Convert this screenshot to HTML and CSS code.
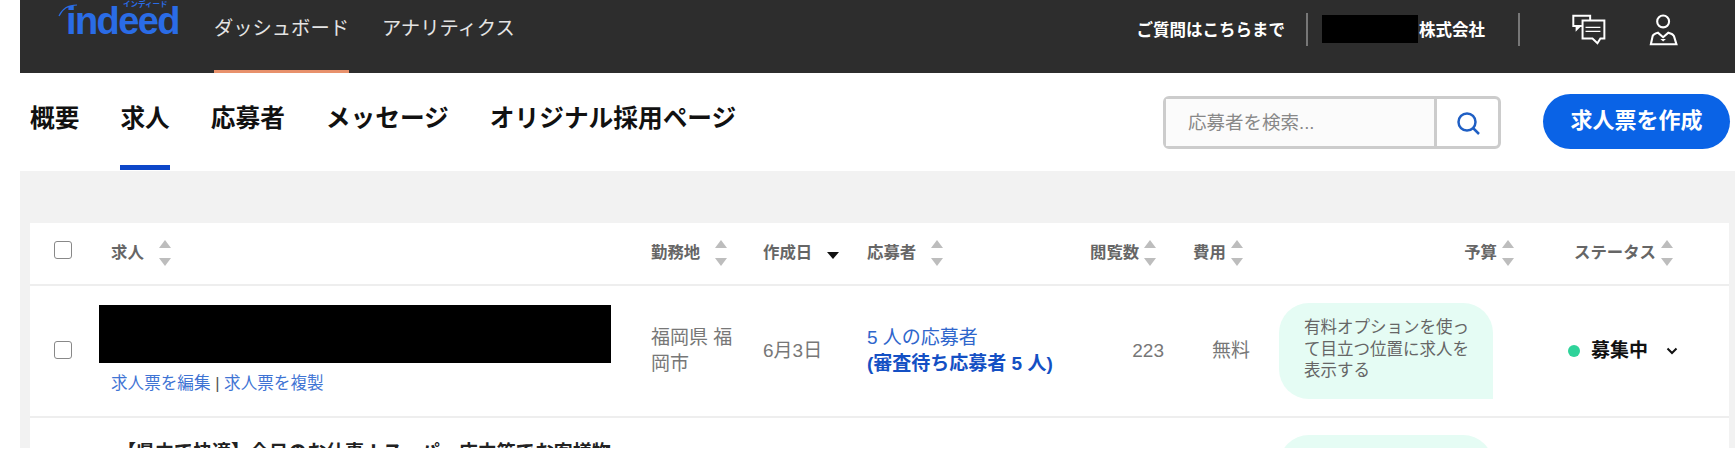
FILE: index.html
```html
<!doctype html>
<html lang="ja">

<head>
  <meta charset="UTF-8" />
  <meta name="viewport" content="width=device-width, initial-scale=1.0" />
  <title>求人</title>
  <link rel="stylesheet" href="styles.css">
</head>

<body>
  <div class="page">
    <header class="topbar">
      <a class="logo" href="#">
        <svg class="logo-arc" viewBox="0 0 24 14" width="24" height="14">
          <path d="M1 13C4 6 10 2 19 2" fill="none" stroke="#2a6ce6" stroke-width="1.2" />
        </svg>
        <span class="logo-kana">インディード</span>
        <span class="logo-word">indeed</span>
      </a>
      <nav class="top-links">
        <a href="#" class="active">ダッシュボード</a>
        <a href="#">アナリティクス</a>
      </nav>
      <div class="top-right">
        <span class="top-text">ご質問はこちらまで</span>
        <span class="top-sep"></span>
        <span class="redact-name"></span>
        <span class="top-text">株式会社</span>
        <span class="top-sep top-sep-last"></span>
        <svg class="icon-chat" viewBox="120 30 115 105" width="38" height="35">
          <path d="M156 72H130V41H181V55M140 72V82L150 72" fill="none" stroke="#fff" stroke-width="6" />
          <path d="M158 55H224V110H212L203 124L188 110H158Z" fill="none" stroke="#fff" stroke-width="6" />
          <path d="M167 76H212M167 88H212" fill="none" stroke="#fff" stroke-width="4" />
        </svg>
        <svg class="icon-person" viewBox="355 35 95 100" width="34" height="35">
          <circle cx="400" cy="62" r="17" fill="none" stroke="#fff" stroke-width="6" />
          <path d="M365 127L370 104Q372 97 385 94L400 107L415 94Q428 97 431 104L438 127Z" fill="none" stroke="#fff" stroke-width="6" />
          <path d="M392 112H408L400 119Z" fill="#fff" />
        </svg>
      </div>
    </header>

    <div class="subbar">
      <nav class="tabs">
        <a href="#">概要</a>
        <a href="#" class="active">求人</a>
        <a href="#">応募者</a>
        <a href="#">メッセージ</a>
        <a href="#">オリジナル採用ページ</a>
      </nav>
      <div class="search">
        <span class="search-text">応募者を検索...</span>
        <span class="search-btn">
          <svg viewBox="0 0 24 24" width="24" height="24">
            <circle cx="11" cy="11" r="8.5" fill="none" stroke="#1f5fc4" stroke-width="2.5" />
            <path d="M17 17L23 23" stroke="#1f5fc4" stroke-width="2.5" />
          </svg>
        </span>
      </div>
      <a href="#" class="create-btn">求人票を作成</a>
    </div>

    <main class="content">
      <div class="card">
        <div class="row head">
          <div class="cell"><span class="check"></span></div>
          <div class="cell">求人<span class="sort sort-wide"><i class="up"></i><i class="down"></i></span></div>
          <div class="cell">勤務地<span class="sort sort-wide"><i class="up"></i><i class="down"></i></span></div>
          <div class="cell">作成日<span class="sort-active"></span></div>
          <div class="cell">応募者<span class="sort sort-wide"><i class="up"></i><i class="down"></i></span></div>
          <div class="cell head-views">閲覧数<span class="sort"><i class="up"></i><i class="down"></i></span></div>
          <div class="cell head-cost">費用<span class="sort"><i class="up"></i><i class="down"></i></span></div>
          <div class="cell head-budget">予算<span class="sort"><i class="up"></i><i class="down"></i></span></div>
          <div class="cell head-status">ステータス<span class="sort"><i class="up"></i><i class="down"></i></span></div>
        </div>

        <div class="row job">
          <div class="cell"><span class="check"></span></div>
          <div class="cell job-cell">
            <div class="redact-title"></div>
            <div class="job-links"><a href="#">求人票を編集</a> | <a href="#">求人票を複製</a></div>
          </div>
          <div class="cell">福岡県 福<br>岡市</div>
          <div class="cell">6月3日</div>
          <div class="cell applicants">
            <a href="#">5 人の応募者<br><b>(審査待ち応募者 5 人)</b></a>
          </div>
          <div class="cell views">223</div>
          <div class="cell cost">無料</div>
          <div class="cell budget">
            <div class="bubble">有料オプションを使って目立つ位置に求人を表示する</div>
          </div>
          <div class="cell status"><span class="dot"></span><b>募集中</b>
            <svg class="chev" viewBox="0 0 12 8" width="12" height="8">
              <path d="M1.5 1.5L6 6L10.5 1.5" fill="none" stroke="#111" stroke-width="2" />
            </svg>
          </div>
        </div>

        <div class="row job">
          <div class="cell"><span class="check"></span></div>
          <div class="cell job-title">【県内で快適】今日のお仕事！スーパー店内等でお客様物</div>
          <div class="cell budget budget-col">
            <div class="bubble">有料オプションを使って目立つ位置に求人を表示する</div>
          </div>
        </div>
      </div>
    </main>
  </div>
</body>

</html>
```

FILE: styles.css
```css
html,
body {
  margin: 0;
  padding: 0;
  background-color: white;
  overflow: hidden;
}

body {
  font-family: "Liberation Sans", "Noto Sans CJK JP", sans-serif;
}

a {
  text-decoration: none;
  color: inherit;
}

.page {
  height: 448px;
  margin-left: 20px;
  overflow: hidden;
  display: flex;
  flex-direction: column;
}

/* top dark bar */
.topbar {
  height: 73px;
  flex: none;
  display: flex;
  background-color: #2d2d2d;
  color: #fff;
}

.logo {
  position: relative;
  display: block;
  width: 112px;
  margin-left: 46px;
  color: #2a6ce6;
}

.logo-word {
  display: block;
  margin-top: 9px;
  font-size: 38px;
  font-weight: 700;
  letter-spacing: -1.6px;
  line-height: 25px;
}

.logo-arc {
  position: absolute;
  left: -8px;
  top: 3px;
}

.logo-kana {
  position: absolute;
  left: 57px;
  top: 1px;
  font-size: 7.5px;
  font-weight: 700;
  line-height: 8px;
  white-space: nowrap;
}

.top-links {
  display: flex;
  gap: 33px;
  margin-left: 36px;
}

.top-links a {
  height: 70px;
  font-size: 19.3px;
  line-height: 58px;
  color: #e4e4e4;
  border-bottom: 3px solid transparent;
}

.top-links a.active {
  border-bottom-color: #e8916c;
}

.top-right {
  display: flex;
  align-items: center;
  height: 58px;
  margin-left: auto;
  padding-right: 54px;
}

.top-text {
  font-size: 16.5px;
  font-weight: 700;
  white-space: nowrap;
}

.top-sep {
  width: 2px;
  height: 33px;
  margin: 0 14px 0 21px;
  background-color: #777;
}

.top-sep-last {
  margin: 0 50px 0 33px;
}

.redact-name {
  width: 96px;
  height: 28px;
  margin-right: 1px;
  background-color: black;
}

.icon-chat {
  margin-right: 39px;
}

/* tabs + search row */
.subbar {
  height: 98px;
  flex: none;
  display: flex;
  align-items: flex-start;
  background-color: white;
}

.tabs {
  display: flex;
  gap: 41px;
  margin-left: 10px;
}

.tabs a {
  height: 92px;
  font-size: 24.7px;
  font-weight: 700;
  line-height: 92px;
  color: #111;
  border-bottom: 5px solid transparent;
}

.tabs a.active {
  border-bottom-color: #0d47c9;
}

.search {
  display: flex;
  width: 338px;
  height: 53px;
  box-sizing: border-box;
  margin: 23px 0 0 auto;
  border: 3px solid #ccc;
  border-radius: 6px;
}

.search-text {
  flex: 1;
  padding-left: 22px;
  font-size: 18.5px;
  line-height: 47px;
  color: #888;
  background-color: #fbfbfb;
  border-right: 3px solid #ccc;
}

.search-btn {
  width: 61px;
  display: flex;
  align-items: center;
  justify-content: center;
}

.create-btn {
  width: 187px;
  height: 55px;
  margin: 21px 5px 0 42px;
  border-radius: 28px;
  background-color: #0a63e6;
  color: white;
  font-size: 22px;
  font-weight: 700;
  line-height: 53px;
  text-align: center;
}

/* table area */
.content {
  flex: 1;
  padding: 52px 6px 0 10px;
  background-color: #f2f2f2;
}

.card {
  background-color: white;
}

.row {
  display: grid;
  grid-template-columns: 81px 540px 112px 104px 218px 87px 83px 275px 199px;
  border-bottom: 2px solid #eeeeee;
}

.cell {
  display: flex;
  align-items: center;
}

.head {
  height: 61px;
  color: #666;
  font-size: 16.4px;
  font-weight: 700;
}

.head .cell {
  padding-bottom: 5px;
  box-sizing: border-box;
}

.head-views {
  padding-left: 5px;
}

.head-cost {
  padding-left: 21px;
}

.head-budget {
  justify-content: flex-end;
  padding-right: 16px;
}

.head-status {
  padding-left: 44px;
}

.check {
  width: 16px;
  height: 16px;
  margin: 0 0 2px 24px;
  border: 1.5px solid #888;
  border-radius: 3px;
  background-color: white;
}

.head .check {
  margin-bottom: 3px;
}

.sort {
  display: inline-flex;
  flex-direction: column;
  gap: 10px;
  margin: 4px 0 0 5px;
}

.sort-wide {
  margin-left: 15px;
}

.sort i {
  display: block;
  width: 0;
  height: 0;
  border-left: 6px solid transparent;
  border-right: 6px solid transparent;
}

.sort .up {
  border-bottom: 8px solid #bdbdbd;
}

.sort .down {
  border-top: 8px solid #bdbdbd;
}

.sort-active {
  width: 0;
  height: 0;
  margin: 9px 0 0 15px;
  border-left: 6px solid transparent;
  border-right: 6px solid transparent;
  border-top: 7px solid #111;
}

.job {
  height: 130px;
  color: #777;
  font-size: 19px;
  line-height: 26.5px;
}

.job-cell {
  flex-direction: column;
  align-items: flex-start;
  justify-content: center;
  padding-bottom: 2px;
}

.redact-title {
  width: 512px;
  height: 58px;
  margin-left: -12px;
  background-color: black;
}

.job-links {
  margin-top: 9px;
  font-size: 16.6px;
  line-height: 24px;
  color: #555;
}

.job-links a {
  color: #3f74d4;
}

.applicants a {
  color: #2f66cc;
}

.applicants b {
  color: #1450c4;
}

.views {
  justify-content: flex-end;
  padding-right: 8px;
}

.cost {
  justify-content: flex-end;
  padding-right: 5px;
}

.budget {
  padding-left: 24px;
}

.budget-col {
  grid-column: 8;
}

.bubble {
  width: 214px;
  height: 96px;
  box-sizing: border-box;
  padding: 14px 24px 0 25px;
  border-radius: 30px 30px 0 30px;
  background-color: #e5fcf4;
  color: #666;
  font-size: 16.5px;
  line-height: 21.5px;
}

.status {
  padding-left: 38px;
  color: #111;
}

.dot {
  width: 12px;
  height: 12px;
  margin-right: 11px;
  border-radius: 50%;
  background-color: #2fd39a;
}

.chev {
  margin-left: 18px;
}

.job-title {
  align-items: flex-start;
  padding: 22px 0 0 6px;
  height: 30px;
  font-size: 19px;
  font-weight: 700;
  color: #222;
  white-space: nowrap;
}
```
